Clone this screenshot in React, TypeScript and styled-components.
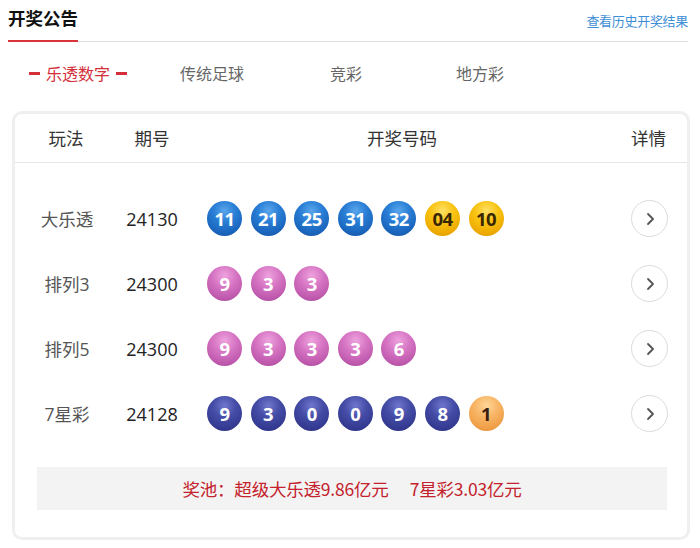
import React from "react";
import styled, { createGlobalStyle } from "styled-components";

const Global = createGlobalStyle`
  html, body { margin: 0; padding: 0; background: #fff; }
  body { font-family: "Open Sans", "Noto Sans CJK SC", sans-serif; }
`;

const Page = styled.div`
  width: 700px;
  height: 548px;
  box-sizing: border-box;
  padding: 0 12px 0 8px;
  overflow: hidden;
`;

const TopBar = styled.div`
  display: flex;
  justify-content: space-between;
  align-items: flex-end;
  height: 42px;
  border-bottom: 1px solid #e2e2e2;
  box-sizing: border-box;
`;

const Title = styled.h1`
  margin: 0 0 -1px 0;
  height: 42px;
  width: 70px;
  box-sizing: border-box;
  padding-top: 5px;
  font-family: "Noto Sans CJK SC", sans-serif;
  font-size: 17.5px;
  font-weight: 700;
  color: #111;
  line-height: 26px;
  white-space: nowrap;
  border-bottom: 2px solid #d9343c;
`;

const MoreLink = styled.a`
  font-family: "Noto Sans CJK SC", sans-serif;
  font-size: 13px;
  color: #3f8fd6;
  text-decoration: none;
  padding-bottom: 11px;
  letter-spacing: -0.3px;
`;

const Tabs = styled.div`
  display: flex;
  padding-left: 3px;
  height: 66px;
  align-items: center;
`;

const Tab = styled.div<{ $active?: boolean }>`
  width: 134px;
  display: flex;
  justify-content: center;
  align-items: center;
  gap: 6px;
  font-family: "Noto Sans CJK SC", sans-serif;
  font-size: 16px;
  color: ${(p) => (p.$active ? "#d3303a" : "#666")};
  margin-top: -4px;
`;

const Dash = styled.span`
  display: inline-block;
  width: 11px;
  height: 3px;
  background: #d3303a;
`;

const Card = styled.div`
  margin: 3px 0 0 4px;
  width: 678px;
  height: 429px;
  box-sizing: border-box;
  border: 3px solid #efefef;
  border-radius: 10px;
  display: flex;
  flex-direction: column;
`;

const Grid = styled.div`
  display: grid;
  grid-template-columns: 102px 70px 430px 63px;
  padding-right: 7px;
`;

const HeadRow = styled(Grid)`
  height: 48px;
  align-items: center;
  border-bottom: 1px solid #e6e6e6;
`;

const HeadCell = styled.div`
  text-align: center;
  font-family: "Noto Sans CJK SC", sans-serif;
  font-size: 17.5px;
  color: #333;
  margin-top: -1px;
`;

const Body = styled.div`
  padding-top: 24px;
`;

const Row = styled(Grid)`
  height: 65px;
  align-items: center;
`;

const NameCell = styled.div`
  text-align: center;
  font-family: "Open Sans", "Noto Sans CJK SC", sans-serif;
  font-size: 17.5px;
  color: #555;
  padding-left: 2px;
  margin-top: -2px;
`;

const IssueCell = styled.div`
  text-align: center;
  font-family: "Open Sans", sans-serif;
  font-size: 18px;
  color: #222;
  margin-top: -2px;
`;

const Balls = styled.div`
  display: flex;
  gap: 8.6px;
  padding-left: 20px;
`;

type BallKind = "blue" | "yellow" | "pink" | "navy" | "orange";

const ballBg: Record<BallKind, string> = {
  blue: "radial-gradient(circle at 50% 28%, #5aa6ec 0%, #2a7fd6 35%, #1b66be 70%, #14509e 100%)",
  yellow: "radial-gradient(circle at 50% 28%, #ffe066 0%, #f8c413 38%, #eeaa00 72%, #d99500 100%)",
  pink: "radial-gradient(circle at 50% 28%, #eea2de 0%, #d675c3 38%, #c05aae 72%, #a24696 100%)",
  navy: "radial-gradient(circle at 50% 28%, #6f78cc 0%, #444ca6 38%, #353b92 72%, #272c78 100%)",
  orange: "radial-gradient(circle at 50% 28%, #ffd79a 0%, #f8b566 38%, #f0a048 72%, #e08a30 100%)",
};

const ballText: Record<BallKind, string> = {
  blue: "#fff",
  yellow: "#3a2600",
  pink: "#fff",
  navy: "#fff",
  orange: "#3a1f10",
};

const Ball = styled.span<{ $kind: BallKind }>`
  position: relative;
  width: 35px;
  height: 35px;
  border-radius: 50%;
  background: ${(p) => ballBg[p.$kind]};
  color: ${(p) => ballText[p.$kind]};
  display: flex;
  align-items: center;
  justify-content: center;
  font-family: "Open Sans", sans-serif;
  font-weight: 700;
  font-size: 18.5px;
  letter-spacing: -0.5px;
  margin-top: -2px;
  &::after {
    content: "";
    position: absolute;
    left: 6px;
    right: 6px;
    bottom: -6px;
    height: 6px;
    border-radius: 50%;
    background: radial-gradient(ellipse at center, rgba(60, 60, 80, 0.35) 0%, rgba(60, 60, 80, 0) 70%);
    z-index: -1;
  }
`;

const DetailCell = styled.div`
  display: flex;
  justify-content: center;
  margin-top: -2px;
`;

const ArrowBtn = styled.button`
  width: 37px;
  height: 37px;
  border-radius: 50%;
  border: 1px solid #dcdcdc;
  background: #fff;
  display: flex;
  align-items: center;
  justify-content: center;
  padding: 0;
  margin-left: 2px;
`;

const Pool = styled.div`
  margin: 20px 20px 0 22px;
  height: 43px;
  background: #f3f3f3;
  display: flex;
  align-items: center;
  justify-content: center;
  gap: 21px;
  font-family: "Noto Sans CJK SC", sans-serif;
  font-size: 17.5px;
  color: #c4222c;
  letter-spacing: -0.2px;
`;

type Draw = { name: string; issue: string; balls: [string, BallKind][] };

const draws: Draw[] = [
  {
    name: "大乐透",
    issue: "24130",
    balls: [
      ["11", "blue"], ["21", "blue"], ["25", "blue"], ["31", "blue"], ["32", "blue"],
      ["04", "yellow"], ["10", "yellow"],
    ],
  },
  { name: "排列3", issue: "24300", balls: [["9", "pink"], ["3", "pink"], ["3", "pink"]] },
  {
    name: "排列5",
    issue: "24300",
    balls: [["9", "pink"], ["3", "pink"], ["3", "pink"], ["3", "pink"], ["6", "pink"]],
  },
  {
    name: "7星彩",
    issue: "24128",
    balls: [
      ["9", "navy"], ["3", "navy"], ["0", "navy"], ["0", "navy"], ["9", "navy"], ["8", "navy"],
      ["1", "orange"],
    ],
  },
];

const Chevron = () => (
  <svg width="14" height="16" viewBox="0 0 14 16" fill="none">
    <path d="M5 3 L10 8 L5 13" stroke="#555" strokeWidth="1.8" strokeLinecap="round" strokeLinejoin="round" />
  </svg>
);

export default function App() {
  return (
    <Page>
      <Global />
      <TopBar>
        <Title>开奖公告</Title>
        <MoreLink href="#">查看历史开奖结果</MoreLink>
      </TopBar>
      <Tabs>
        <Tab $active>
          <Dash />
          乐透数字
          <Dash />
        </Tab>
        <Tab>传统足球</Tab>
        <Tab>竞彩</Tab>
        <Tab>地方彩</Tab>
      </Tabs>
      <Card>
        <HeadRow>
          <HeadCell>玩法</HeadCell>
          <HeadCell>期号</HeadCell>
          <HeadCell>开奖号码</HeadCell>
          <HeadCell>详情</HeadCell>
        </HeadRow>
        <Body>
          {draws.map((d) => (
            <Row key={d.name}>
              <NameCell>{d.name}</NameCell>
              <IssueCell>{d.issue}</IssueCell>
              <Balls>
                {d.balls.map(([n, k], i) => (
                  <Ball key={i} $kind={k}>
                    {n}
                  </Ball>
                ))}
              </Balls>
              <DetailCell>
                <ArrowBtn>
                  <Chevron />
                </ArrowBtn>
              </DetailCell>
            </Row>
          ))}
        </Body>
        <Pool>
          <span>奖池：超级大乐透9.86亿元</span>
          <span>7星彩3.03亿元</span>
        </Pool>
      </Card>
    </Page>
  );
}
